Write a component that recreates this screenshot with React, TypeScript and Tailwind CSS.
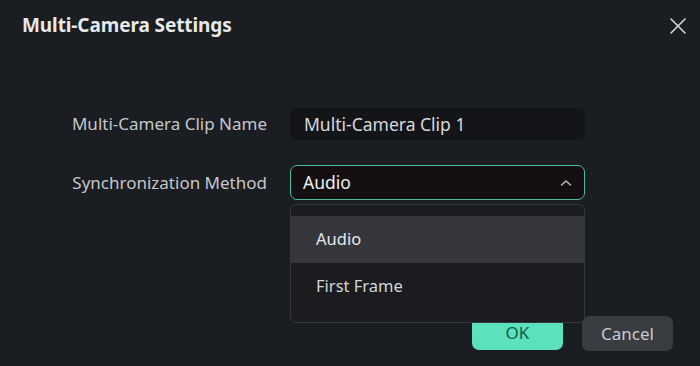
import React from "react";

export default function App() {
  return (
    <div
      className="w-[700px] h-[366px] bg-[#1a1d21] flex flex-col overflow-hidden"
      style={{ fontFamily: '"Noto Sans", "Open Sans", sans-serif' }}
    >
      <div className="flex items-center justify-between pl-[22px] pr-[13px] h-[51px]">
        <div className="text-[19px] font-bold text-[#e6e8ea] tracking-[-0.1px]">Multi-Camera Settings</div>
        <svg width="18" height="18" viewBox="0 0 18 18" className="text-[#d4d6d8]">
          <path d="M2 2 L16 16 M16 2 L2 16" stroke="currentColor" strokeWidth="1.6" strokeLinecap="round" />
        </svg>
      </div>

      <div className="flex flex-col mt-[57px]">
        <div className="flex items-center h-[32px]">
          <div className="w-[267px] text-right text-[17px] text-[#c4c7ca]">Multi-Camera Clip Name</div>
          <div className="ml-[23px] w-[295px] h-[32px] rounded-[6px] bg-[#141519] flex items-center pl-[14px] text-[17.5px] text-[#d6d8da]">
            Multi-Camera Clip 1
          </div>
        </div>

        <div className="flex items-center h-[35px] mt-[25px]">
          <div className="w-[267px] text-right text-[17px] text-[#c4c7ca]">Synchronization Method</div>
          <div className="relative ml-[23px] w-[295px] h-[35px]">
            <div className="w-full h-full rounded-[7px] border-[1.5px] border-[#4bbd97] bg-[#150f13] flex items-center justify-between pl-[12px] pr-[12px]">
              <span className="text-[17.5px] text-[#eceef0]">Audio</span>
              <svg width="12" height="8" viewBox="0 0 12 8" className="text-[#b8babd]">
                <path d="M1.5 6 L6 2 L10.5 6" fill="none" stroke="currentColor" strokeWidth="1.5" strokeLinecap="round" strokeLinejoin="round" />
              </svg>
            </div>
            <div className="absolute left-0 top-[39px] w-[295px] h-[119px] rounded-[6px] border border-[#35373c] bg-[#1b1c20] pt-[11px] z-10">
              <div className="h-[47px] bg-[#35373c] flex items-center pl-[25px] text-[16.5px] text-[#e6e8ea]">Audio</div>
              <div className="h-[47px] flex items-center pl-[25px] text-[16.5px] text-[#d4d6d8]">First Frame</div>
            </div>
          </div>
        </div>
      </div>

      <div className="flex justify-end gap-[19px] pr-[27px] mt-auto mb-[15px]">
        <button className="w-[91px] h-[34px] rounded-[7px] bg-[#5ce1be] text-[17px] text-[#12604a] flex items-center justify-center">OK</button>
        <button className="w-[91px] h-[35px] rounded-[7px] bg-[#393c41] text-[17px] text-[#c8cacd] flex items-center justify-center">Cancel</button>
      </div>
    </div>
  );
}
